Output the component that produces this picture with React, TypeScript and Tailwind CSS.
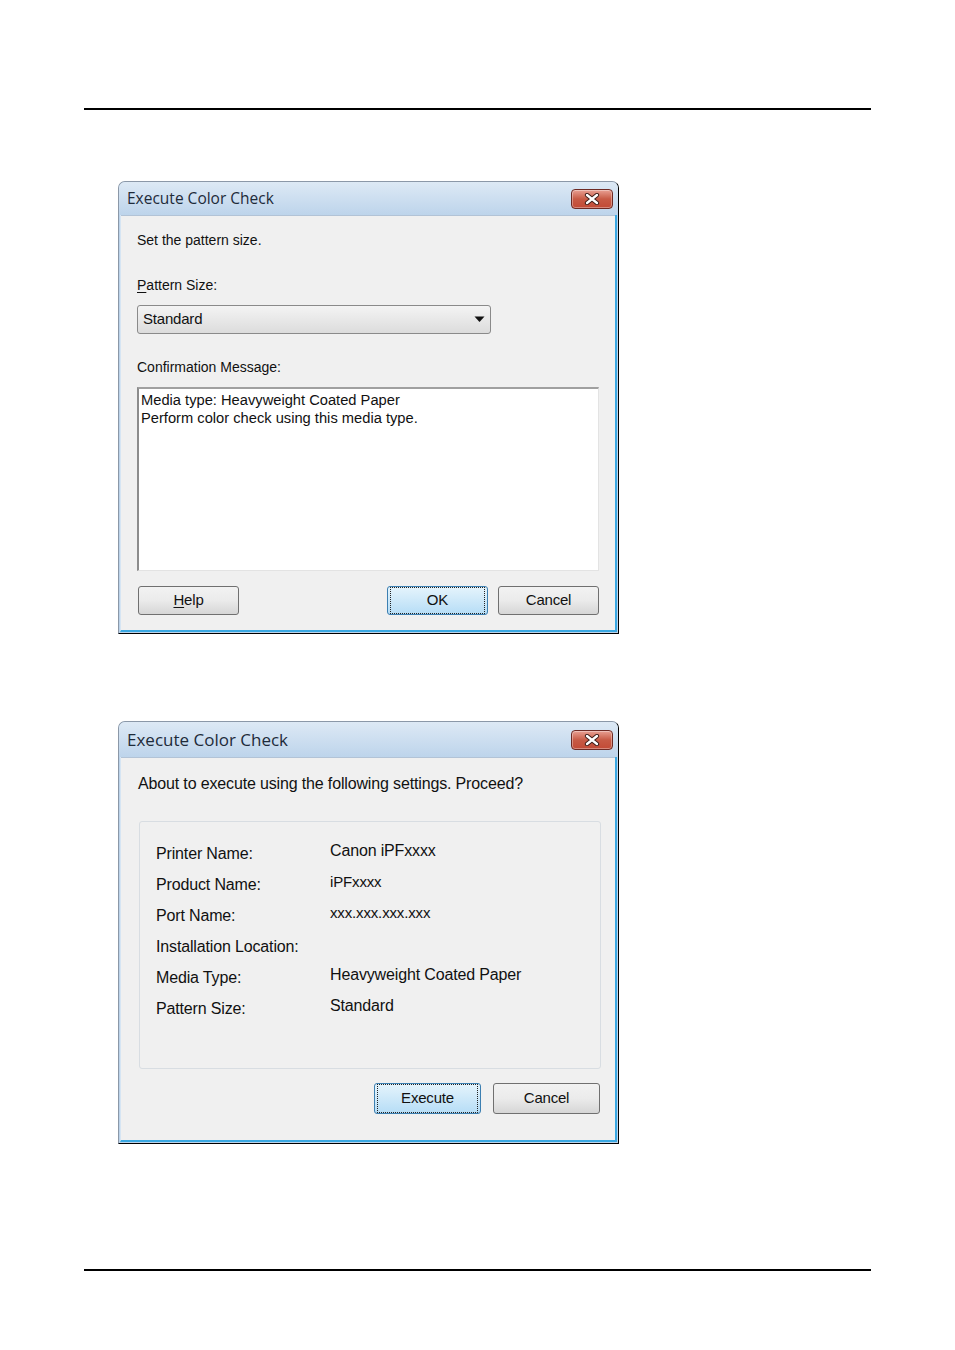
import React from 'react';

const font = { fontFamily: '"Liberation Sans", Arial, sans-serif' };

const CloseButton = () => (
  <div className="w-[42px] h-[20px] rounded-[4px] border border-[#6d2a24] bg-gradient-to-b from-[#e8a093] via-[#c75a45] to-[#c24a36] flex items-center justify-center shadow-[inset_0_0_0_1px_rgba(255,255,255,0.35)]">
    <svg width="16" height="12" viewBox="0 0 16 12">
      <path d="M3 2 L13 10 M13 2 L3 10" stroke="#3a1a16" strokeWidth="4.2" strokeLinecap="round" />
      <path d="M3 2 L13 10 M13 2 L3 10" stroke="#ffffff" strokeWidth="2.4" strokeLinecap="round" />
    </svg>
  </div>
);

const Window = ({ title, titleSize, barH, children }: { title: string; titleSize: string; barH: string; children: React.ReactNode }) => (
  <div className="w-[501px] rounded-t-[7px] border border-[#8b98a8] border-r-black border-b-black bg-[#bcd3ea]">
    <div className={`${barH} rounded-t-[6px] bg-gradient-to-b from-[#dde9f5] to-[#bdd4eb] flex items-center justify-between pl-[8px] pr-[5px]`}>
      <span className={`${titleSize} text-[#1e2b3a]`} style={{ fontFamily: '"Open Sans", "Liberation Sans", sans-serif' }}>{title}</span>
      <CloseButton />
    </div>
    <div className="mx-[1px] mb-[1px] border-r-[2px] border-b-[2px] border-r-[#3aa8e2] border-b-[#3aa8e2] border-l border-l-[#d6e5f3]">
      <div className="bg-[#f0f0f0] border-t border-[#b2c3d6]">{children}</div>
    </div>
  </div>
);

const Button = ({ children, focused, w, h }: { children: React.ReactNode; focused?: boolean; w: string; h: string }) => (
  <div
    className={`${w} ${h} rounded-[3px] border flex items-center justify-center text-[15px] tracking-[-0.2px] text-[#111] ${
      focused
        ? 'border-[#3c7fb1] bg-gradient-to-b from-[#e5f4fc] to-[#b6ddf6]'
        : 'border-[#707070] bg-gradient-to-b from-[#f2f2f2] via-[#ebebeb] to-[#d6d6d6]'
    }`}
  >
    <div className={`w-full h-full m-[2px] flex items-center justify-center ${focused ? 'border border-dotted border-[#222]' : ''}`}>
      {children}
    </div>
  </div>
);

const rows: [string, string, string][] = [
  ['Printer Name:', 'Canon iPFxxxx', 'text-[16px]'],
  ['Product Name:', 'iPFxxxx', 'text-[15px]'],
  ['Port Name:', 'xxx.xxx.xxx.xxx', 'text-[15px]'],
  ['Installation Location:', '', 'text-[15px]'],
  ['Media Type:', 'Heavyweight Coated Paper', 'text-[16px]'],
  ['Pattern Size:', 'Standard', 'text-[16px]'],
];

export default function App() {
  return (
    <div className="w-[955px] h-[1350px] bg-white relative" style={font}>
      <div className="pt-[108px] px-[84px]">
        <div className="w-[787px] h-[2px] bg-black" />
      </div>

      <div className="pl-[118px] pt-[71px]">
        <Window title="Execute Color Check" titleSize="text-[15.5px]" barH="h-[33px]">
          <div className="pl-[16px] pr-[16px] pt-[14px] pb-[15px] text-[14px] text-[#111]">
            <div className="h-[20px] leading-[20px]">Set the pattern size.</div>
            <div className="h-[20px] leading-[20px] mt-[25px]">
              <span className="underline underline-offset-2">P</span>attern Size:
            </div>
            <div className="mt-[10px] w-[354px] h-[29px] rounded-[3px] border border-[#8a8a8a] bg-gradient-to-b from-[#f4f4f4] to-[#dcdcdc] flex items-center justify-between pl-[5px] pr-[5px] text-[15px] tracking-[-0.2px]">
              <span>Standard</span>
              <svg width="11" height="7" viewBox="0 0 11 7">
                <path d="M0.5 0.5 L10.5 0.5 L5.5 6 Z" fill="#111" />
              </svg>
            </div>
            <div className="h-[20px] leading-[20px] mt-[23px]">Confirmation Message:</div>
            <div className="mt-[10px] w-[462px] h-[184px] border-l-[2px] border-t-[2px] border-l-[#8c8c8c] border-t-[#a0a0a0] border-r border-b border-r-[#e3e3e3] border-b-[#e3e3e3] bg-white px-[2px] pt-[2px] text-[14.7px] leading-[18px]">
              <div>Media type: Heavyweight Coated Paper</div>
              <div>Perform color check using this media type.</div>
            </div>
            <div className="mt-[15px] flex items-center">
              <div className="w-[1px]" />
              <Button w="w-[101px]" h="h-[29px]">
                <span className="underline underline-offset-2">H</span>elp
              </Button>
              <div className="flex-1" />
              <Button w="w-[101px]" h="h-[29px]" focused>
                OK
              </Button>
              <div className="w-[10px]" />
              <Button w="w-[101px]" h="h-[29px]">Cancel</Button>
            </div>
          </div>
        </Window>
      </div>

      <div className="pl-[118px] pt-[87px]">
        <Window title="Execute Color Check" titleSize="text-[17px]" barH="h-[35px]">
          <div className="pl-[17px] pr-[15px] pt-[15px] pb-[26px] text-[16px] tracking-[-0.15px] text-[#111]">
            <div className="h-[22px] leading-[22px]">About to execute using the following settings. Proceed?</div>
            <div className="mt-[26px] ml-[1px] w-[462px] h-[248px] rounded-[3px] border border-[#d8dde2] pt-[18px] pl-[16px]">
              {rows.map(([label, value, size]) => (
                <div key={label} className="h-[31px] flex">
                  <div className="w-[174px] pt-[3px] leading-[22px]">{label}</div>
                  <div className={`${size} leading-[22px]`}>{value}</div>
                </div>
              ))}
            </div>
            <div className="mt-[14px] flex items-center justify-end">
              <Button w="w-[107px]" h="h-[31px]" focused>
                Execute
              </Button>
              <div className="w-[12px]" />
              <Button w="w-[107px]" h="h-[31px]">Cancel</Button>
            </div>
          </div>
        </Window>
      </div>

      <div className="absolute left-[84px] top-[1269px] w-[787px] h-[2px] bg-black" />
    </div>
  );
}
